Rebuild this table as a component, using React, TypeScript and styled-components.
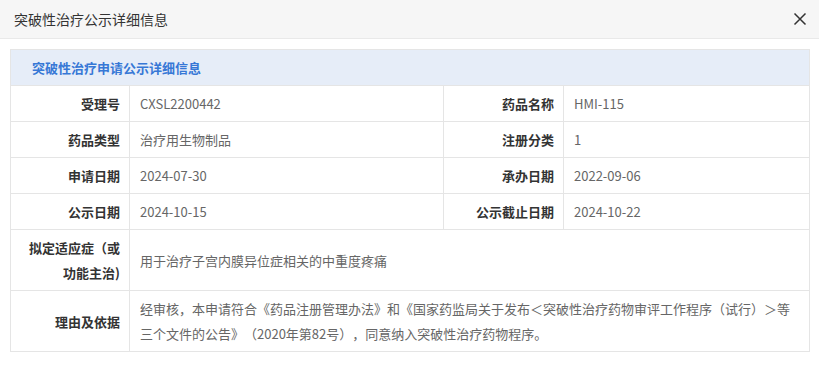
import React from 'react';
import styled, { createGlobalStyle } from 'styled-components';

const GlobalStyle = createGlobalStyle`
  html, body {
    margin: 0;
    padding: 0;
    background: #fff;
    font-family: "Noto Sans CJK SC", "Noto Sans", sans-serif;
  }
`;

const Dialog = styled.div`
  width: 819px;
  background: #fff;
`;

const Header = styled.div`
  height: 38px;
  display: flex;
  align-items: center;
  justify-content: space-between;
  padding: 0 12px 0 14px;
  background: #f6f6f6;
  border-bottom: 1px solid #e9e9e9;
  color: #333;
  font-size: 14px;
`;

const Close = styled.button`
  border: none;
  background: transparent;
  padding: 0;
  width: 14px;
  height: 14px;
  display: flex;
  cursor: pointer;
`;

const Body = styled.div`
  padding: 10px 9px 10px 10px;
`;

const Table = styled.table`
  width: 800px;
  border-collapse: collapse;
  table-layout: fixed;
  font-size: 13px;
  line-height: 25px;
  text-spacing-trim: space-all;

  td {
    border: 1px solid #e5e5e5;
    padding: 5px 10px;
    vertical-align: middle;
  }
`;

const Caption = styled.td`
  && {
    background: #e6edf8;
    color: #3778d6;
    font-weight: bold;
    padding-left: 21px;
    height: 25px;
  }
`;

const Label = styled.td`
  && {
    text-align: right;
    color: #333;
    font-weight: bold;
    padding-right: 9px;
  }
`;

const Value = styled.td`
  color: #666;
`;

interface PairProps {
  items: [string, string][];
}

const PairRow: React.FC<PairProps> = ({ items }) => (
  <tr>
    {items.map(([k, v]) => (
      <React.Fragment key={k}>
        <Label>{k}</Label>
        <Value>{v}</Value>
      </React.Fragment>
    ))}
  </tr>
);

export default function App() {
  return (
    <Dialog>
      <GlobalStyle />
      <Header>
        <span>突破性治疗公示详细信息</span>
        <Close aria-label="关闭">
          <svg width="14" height="14" viewBox="0 0 14 14">
            <path d="M1.5 1.5 L12.5 12.5 M12.5 1.5 L1.5 12.5" stroke="#333" strokeWidth="1.5" />
          </svg>
        </Close>
      </Header>
      <Body>
        <Table>
          <colgroup>
            <col style={{ width: 119 }} />
            <col style={{ width: 314 }} />
            <col style={{ width: 120 }} />
            <col />
          </colgroup>
          <tbody>
            <tr>
              <Caption colSpan={4}>突破性治疗申请公示详细信息</Caption>
            </tr>
            <PairRow items={[['受理号', 'CXSL2200442'], ['药品名称', 'HMI-115']]} />
            <PairRow items={[['药品类型', '治疗用生物制品'], ['注册分类', '1']]} />
            <PairRow items={[['申请日期', '2024-07-30'], ['承办日期', '2022-09-06']]} />
            <PairRow items={[['公示日期', '2024-10-15'], ['公示截止日期', '2024-10-22']]} />
            <tr>
              <Label>拟定适应症（或功能主治)</Label>
              <Value colSpan={3}>用于治疗子宫内膜异位症相关的中重度疼痛</Value>
            </tr>
            <tr>
              <Label>理由及依据</Label>
              <Value colSpan={3}>
                经审核，本申请符合《药品注册管理办法》和《国家药监局关于发布＜突破性治疗药物审评工作程序（试行）＞等三个文件的公告》（2020年第82号），同意纳入突破性治疗药物程序。
              </Value>
            </tr>
          </tbody>
        </Table>
      </Body>
    </Dialog>
  );
}
